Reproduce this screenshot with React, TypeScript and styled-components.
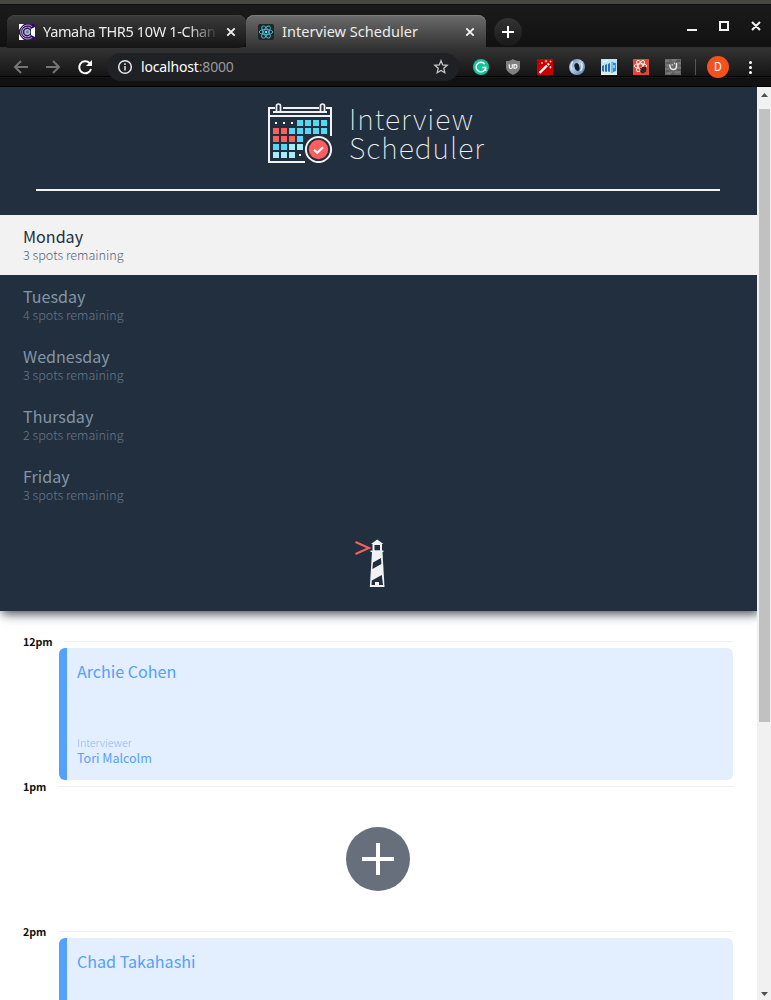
import React from "react";
import styled, { createGlobalStyle } from "styled-components";

const GlobalStyle = createGlobalStyle`
  * { box-sizing: border-box; }
  html, body { margin: 0; height: 100%; overflow: hidden; background: #fff; }
  svg { display: block; flex: none; }
`;

const sourceFont = `"Noto Sans CJK SC", "Noto Sans", sans-serif`;
const uiFont = `"Noto Sans", "Open Sans", sans-serif`;

const Window = styled.div`
  width: 771px;
  height: 1000px;
  display: flex;
  flex-direction: column;
  overflow: hidden;
`;

/* ---------- browser chrome ---------- */
const TabStrip = styled.div`
  height: 48px;
  flex: none;
  display: flex;
  align-items: flex-start;
  padding: 11px 7px 0;
  border-top: 4px solid #484842;
  background: linear-gradient(#1b1b1b, #111);
  box-shadow: inset 0 -1px #303030, inset 0 1px #101010;
`;

const Tab = styled.div<{ $active?: boolean }>`
  width: ${(p) => (p.$active ? 240 : 239)}px;
  height: 33px;
  display: flex;
  align-items: center;
  padding: 1px ${(p) => (p.$active ? 11 : 10)}px 0 12px;
  border-radius: 8px 8px ${(p) => (p.$active ? "0 0" : "8px 0")};
  background: ${(p) => (p.$active ? "linear-gradient(#6b6b6b, #333)" : "linear-gradient(#3b3b3b, #151515)")};
  box-shadow: inset 0 1px ${(p) => (p.$active ? "#7c7c7c" : "#424242")};
`;

const TabTitle = styled.div<{ $fade?: boolean; $spacing: number }>`
  width: 176px;
  margin: -2px 0 0 8px;
  overflow: hidden;
  white-space: nowrap;
  font: 14.5px/20px ${uiFont};
  letter-spacing: ${(p) => p.$spacing}px;
  color: #ececec;
  ${(p) => p.$fade && "mask-image: linear-gradient(90deg, #000 82%, transparent 100%);"}
`;

const TabClose = styled.div`
  margin-left: auto;
`;

const NewTab = styled.div`
  width: 28px;
  height: 28px;
  margin: 3px 0 0 8px;
  border-radius: 50%;
  background: linear-gradient(#333, #191919);
  display: grid;
  place-items: center;
`;

const WindowButtons = styled.div`
  margin: 5px 2px 0 auto;
`;

const Toolbar = styled.div`
  height: 39px;
  flex: none;
  display: flex;
  align-items: flex-start;
  padding: 5px 14px 0 12px;
  background: linear-gradient(#333 0, #151515 28px, #000 28px, #000 29px, #1d1d1d 29px, #111 30px, #111 38px, #000 38px);
`;

const NavIcons = styled.div`
  padding-top: 4px;
  width: 95px;
`;

const Address = styled.div`
  width: 352px;
  height: 28px;
  display: flex;
  align-items: center;
  padding: 0 10px;
  border-radius: 14px;
  background: #202124;
`;

const Url = styled.div`
  margin-left: 8px;
  font: 14px/20px ${uiFont};
  letter-spacing: -0.16px;
  color: #fff;
  span { color: #9a9a9a; }
`;

const Star = styled.div`
  margin-left: auto;
`;

const Extensions = styled.div`
  display: flex;
  gap: 16px;
  margin: 6px 0 0 14px;
`;

const Divider = styled.div`
  width: 1px;
  height: 16px;
  margin: 6px 0 0 14px;
  background: #555;
`;

const Avatar = styled.div`
  width: 22px;
  height: 22px;
  margin: 3px 0 0 11px;
  border-radius: 50%;
  background: #f4511e;
  color: #fff;
  font: 12px/22px Roboto, sans-serif;
  text-align: center;
`;

const Kebab = styled.div`
  margin: 6px 0 0 auto;
`;

/* ---------- page ---------- */
const Viewport = styled.div`
  flex: 1;
  min-height: 0;
  display: flex;
`;

const Page = styled.main`
  width: 757px;
  height: 913px;
  overflow: hidden;
  background: #fff;
  font-family: ${sourceFont};
`;

const Sidebar = styled.section`
  height: 524px;
  padding-top: 16px;
  display: flex;
  flex-direction: column;
  align-items: center;
  background: #222f3e;
  box-shadow: 2px 3px 10px rgba(34, 47, 62, 0.85);
`;

const Brand = styled.div`
  width: 221px;
  height: 60px;
  display: flex;
  gap: 16px;
`;

const Wordmark = styled.div`
  white-space: nowrap;
  font-size: 28.5px;
  font-weight: 100;
  line-height: 29px;
  letter-spacing: 1px;
  color: #f2f2f2;
`;

const WordmarkLine = styled.div`
  height: 29px;
`;

const Separator = styled.div`
  width: 684px;
  height: 2px;
  margin: 26px 1px 24px 0;
  background: #f2f2f2;
`;

const DayList = styled.nav`
  width: 100%;
`;

const Day = styled.div<{ $selected?: boolean }>`
  height: 60px;
  padding: 9px 23px 0;
  background: ${(p) => (p.$selected ? "#f2f2f2" : "transparent")};
  color: ${(p) => (p.$selected ? "#222f3e" : "#8395a7")};
`;

const DayName = styled.div`
  font-size: 16.1px;
  line-height: 24px;
`;

const Spots = styled.div<{ $selected?: boolean }>`
  font-size: 12.6px;
  font-weight: 300;
  line-height: 14px;
  color: ${(p) => (p.$selected ? "#576574" : "#66778a")};
`;

const Lighthouse = styled.div`
  margin: 23px 2px 0 0;
  width: 46px;
`;

const Schedule = styled.section`
  padding: 24px 24px 0 23px;
`;

const Slot = styled.article`
  height: 145px;
`;

const TimeRow = styled.header`
  height: 13px;
  display: flex;
  align-items: center;
  justify-content: space-between;
  font-size: 10.7px;
  letter-spacing: -0.1px;
  font-weight: 700;
  line-height: 13px;
  color: #111;
`;

const Rule = styled.div<{ $width: number }>`
  width: ${(p) => p.$width}px;
  height: 1px;
  background: #efefef;
`;

const Card = styled.div`
  height: 132px;
  margin-left: 36px;
  padding: 11px 10px 15px 10px;
  display: flex;
  flex-direction: column;
  border-left: 8px solid #54a0ff;
  border-radius: 6px;
  background: #e3effe;
  color: #54a0ff;
`;

const Student = styled.div`
  font-size: 16.1px;
  line-height: 24px;
`;

const Label = styled.div`
  margin-top: auto;
  font-size: 10.7px;
  font-weight: 300;
  line-height: 14px;
  color: #86b9fb;
`;

const Interviewer = styled.div`
  font-size: 12.5px;
  line-height: 15px;
`;

const Empty = styled.div`
  height: 132px;
  padding-top: 34px;
  display: flex;
  justify-content: center;
`;

const AddButton = styled.div`
  width: 64px;
  height: 64px;
  border-radius: 50%;
  background: #666f7b;
  display: grid;
  place-items: center;
`;

const Scrollbar = styled.div`
  width: 14px;
  background: #f1f1f1;
  display: flex;
  flex-direction: column;
  align-items: center;
`;

const Thumb = styled.div`
  width: 11px;
  height: 613px;
  margin: 6px 0 auto 1px;
  background: #c1c1c1;
`;

const Cross = () => (
  <svg width="10" height="10" viewBox="0 0 10 10" stroke="#f2f2f2" strokeWidth="1.9">
    <path d="M1.300 1.300l7.400 7.400M8.700 1.300l-7.400 7.400" />
  </svg>
);

const YamahaIcon = () => (
  <svg width="16" height="16" viewBox="0 0 16 16">
    <path fill="#fff" d="M0 0h16v16H0z" />
    <path fill="#30105e" d="M5 0h11v3l-4 2v6l4 2v3H5L2 13 0 10V6l2-3z" />
    <path d="M13 2.500A7 7 0 1 0 13 13.500" fill="none" stroke="#cfc4dc" strokeWidth=".8" />
    <path d="M11.500 4.500A4.800 4.800 0 1 0 11.500 11.500" fill="none" stroke="#b7a7ca" strokeWidth="1.100" />
    <circle cx="8.300" cy="8" r="3" fill="#a9c4cb" />
    <circle cx="8.300" cy="8" r="1.400" fill="#647b91" />
    <path d="M0 3l4-3M0 13l4 3" stroke="#fff" />
  </svg>
);

const ReactIcon = () => (
  <svg width="16" height="16" viewBox="0 0 16 16">
    <rect width="16" height="16" rx="2" fill="#222527" />
    <g fill="none" stroke="#4db9d3" strokeWidth=".9">
      <ellipse cx="8" cy="8" rx="6.8" ry="2.6" />
      <ellipse cx="8" cy="8" rx="6.8" ry="2.6" transform="rotate(60 8 8)" />
      <ellipse cx="8" cy="8" rx="6.8" ry="2.6" transform="rotate(120 8 8)" />
    </g>
    <circle cx="8" cy="8" r="1.3" fill="#61dafb" />
  </svg>
);

const extensionDrawings = [
  <>
    <circle cx="8" cy="8" r="8" fill="#15c39a" />
    <path d="M11.8 5.2A4.8 4.8 0 1 0 12.7 8.5H9.3M12.7 8.5V12" fill="none" stroke="#fff" strokeWidth="1.4" />
  </>,
  <>
    <path d="M8 0c2 1.4 4 2 7 2v6c0 4-3 6-7 8-4-2-7-4-7-8V2c3 0 5-.6 7-2z" fill="#808080" />
    <path d="M4.3 5.3v2.8q0 1.4 1.5 1.4t1.5-1.4V5.3M9 5.6h1q2 0 2 1.8t-2 1.8H9z" fill="none" stroke="#fff" strokeWidth="1.1" />
  </>,
  <>
    <path d="M0 0h16v16H0z" fill="#c90000" />
    <path d="M2.5 14L10 6.5" stroke="#fff" strokeWidth="2.4" />
    <path d="M10.7 5.8L12 4.5" stroke="#fff" strokeWidth="2.4" />
    <path d="M9 1v2.5M7.8 2.2h2.5M5 3v2M4 4h2M13.5 7v2.5M12.2 8.2h2.5M13.5 1.5v2M12.5 2.5h2" stroke="#ffd8d8" strokeWidth=".8" />
  </>,
  <>
    <defs>
      <linearGradient id="ring" x2="1" y2="1">
        <stop offset="0" stopColor="#526f91" />
        <stop offset=".45" stopColor="#b4cce8" />
        <stop offset="1" stopColor="#4a6d96" />
      </linearGradient>
    </defs>
    <circle cx="8" cy="8" r="8" fill="url(#ring)" />
    <path d="M4 2.5Q1 6 2.5 10.5M12 4q2.5 4-.5 8" stroke="#e2ecf7" strokeWidth="1.5" fill="none" />
    <ellipse cx="8" cy="8" rx="2.4" ry="4" fill="#111a29" transform="rotate(-15 8 8)" />
  </>,
  <>
    <path d="M0 0h16v16H0z" fill="#bfe4f2" />
    <path d="M0 12h16v4H0z" fill="#dcebf0" />
    <path d="M1 7l2-1v7l-2-1zM4 6l2-1v8l-2-.5zM7 5l2-1v9l-2-.5z" fill="#2a6fb8" />
    <path d="M10 3l5 1v8l-5 2z" fill="#2b8ed4" />
    <path d="M10 3l2 .5v10l-2 .5z" fill="#6fc0ee" />
    <path d="M2 3l5-1.500M13 6v3" stroke="#fff" fill="none" />
  </>,
  <>
    <path d="M0 0h16v16H0z" fill="#df4a3d" />
    <g fill="none" stroke="#fff" strokeWidth=".9">
      <ellipse cx="7.5" cy="7" rx="6.3" ry="2.3" />
      <ellipse cx="7.5" cy="7" rx="6.3" ry="2.3" transform="rotate(60 7.5 7)" />
      <ellipse cx="7.5" cy="7" rx="6.3" ry="2.3" transform="rotate(120 7.5 7)" />
    </g>
    <ellipse cx="10.3" cy="11" rx="2.7" ry="3.5" fill="#38211f" transform="rotate(35 10.3 11)" />
    <path d="M6.5 9l7 4M8 13l5-5M10 8v6" stroke="#38211f" />
  </>,
  <>
    <path d="M0 0h16v16H0z" fill="#676767" />
    <path d="M0 2h4M7 1h5M13 4h3M1 6h3M0 10h4M12 9h4M2 14h5M10 13h5" stroke="#8b8b8b" />
    <path d="M2 4h3M11 2h4M1 12h3M12 11h4M6 15h3" stroke="#4b4b4b" />
    <path d="M4.700 5.500q.2 5 3.500 5t3.300-3.500V4" fill="none" stroke="#e8e8e8" strokeWidth="1.500" />
    <path d="M7.300 5v1.800M9.500 3.500v1.800" stroke="#ccc" strokeWidth="1.200" />
  </>,
];

const CYAN = "#55d8f0";
const RED = "#ff5e5e";
const PALE = "#a6edfa";
const calendarRows: (string | null)[][] = [
  [null, null, null, CYAN, CYAN, CYAN, CYAN],
  [RED, RED, CYAN, CYAN, CYAN, CYAN, CYAN],
  [RED, RED, RED, CYAN],
  [CYAN, CYAN, PALE, PALE],
  [PALE, PALE, PALE, null],
];

const CalendarLogo = () => (
  <svg width="65" height="60" viewBox="0 0 65 60">
    <g fill="none" stroke="#f2f2f2" strokeWidth="2">
      <path d="M7 5H1v54h36M15 5h36M58 5h5v28M1 13h62M5 9h54" />
      <path d="M8.500 9V3a2 2 0 0 1 4 0v6M52.500 9V3a2 2 0 0 1 4 0v6" strokeWidth="1.700" />
    </g>
    {calendarRows.map((row, y) =>
      row.map((fill, x) =>
        fill ? (
          <rect key={`${x}-${y}`} x={5 + x * 8} y={17 + y * 8} width="6" height="6" fill={fill} />
        ) : (
          <rect key={`${x}-${y}`} x={7 + x * 8} y={19 + y * 8} width="2" height="2" fill="#fff" />
        )
      )
    )}
    <circle cx="50.500" cy="46.500" r="14.500" fill="#222f3e" />
    <circle cx="50.500" cy="46.500" r="12.600" fill="#222f3e" stroke="#f2f2f2" strokeWidth="2" />
    <circle cx="50.500" cy="46.500" r="9.700" fill={RED} />
    <path d="M46 46.800l3.200 3 5.800-5.600" fill="none" stroke="#fff" strokeWidth="2" />
  </svg>
);

const LighthouseLogo = () => (
  <svg width="46" height="50" viewBox="0 0 46 50">
    <path d="M.5 4L14 10 .500 16" fill="none" stroke="#ff5e5e" strokeWidth="2" />
    <path d="M16 6l6.200-4.500L28.400 6zM17.500 5h9.500v9h-9.500z" fill="#f2f2f2" />
    <path d="M19.500 7h5.500v5.500h-5.500z" fill="#222f3e" />
    <path d="M15.500 13.300h13" stroke="#f2f2f2" strokeWidth="1.500" />
    <path d="M17 14h10.500L29.500 49H14.800z" fill="#f2f2f2" />
    <path d="M18 24.500l8-4.500.4 6-9 5zM16.800 42.500l10-5.500 1.200 10H16.500z" fill="#222f3e" />
    <path d="M20 48v-4h4v4z" fill="#f2f2f2" />
  </svg>
);

const days = [
  ["Monday", 3],
  ["Tuesday", 4],
  ["Wednesday", 3],
  ["Thursday", 2],
  ["Friday", 3],
] as const;

const appointments = [
  { time: "12pm", student: "Archie Cohen", interviewer: "Tori Malcolm", rule: 669 },
  { time: "1pm", rule: 675 },
  { time: "2pm", student: "Chad Takahashi", rule: 675 },
];

export default function App() {
  return (
    <Window>
      <GlobalStyle />
      <TabStrip>
        <Tab>
          <YamahaIcon />
          <TabTitle $fade $spacing={-0.35}>Yamaha THR5 10W 1-Chan</TabTitle>
          <TabClose><Cross /></TabClose>
        </Tab>
        <Tab $active>
          <ReactIcon />
          <TabTitle $spacing={0.04}>Interview Scheduler</TabTitle>
          <TabClose><Cross /></TabClose>
        </Tab>
        <NewTab>
          <svg width="12" height="12" viewBox="0 0 12 12" stroke="#fff" strokeWidth="2"><path d="M6 0v12M0 6h12" /></svg>
        </NewTab>
        <WindowButtons>
          <svg width="76" height="12" viewBox="0 0 76 12" fill="none" stroke="#f2f2f2" strokeWidth="2">
            <path d="M1 10h10M34 2h8v8h-8zM66 2l8 8M74 2l-8 8" />
          </svg>
        </WindowButtons>
      </TabStrip>
      <Toolbar>
        <NavIcons>
          <svg width="84" height="20" viewBox="0 0 84 20" fill="none" strokeWidth="2">
            <path d="M16 10H3M9 4l-6 6 6 6M34 10h13M41 4l6 6-6 6" stroke="#747474" />
            <path d="M77.500 6A6 6 0 1 0 79 12" stroke="#fff" />
            <path d="M80 3v6h-6z" fill="#fff" />
          </svg>
        </NavIcons>
        <Address>
          <svg width="16" height="16" viewBox="0 0 16 16" fill="none" stroke="#e8e8e8" strokeWidth="1.500">
            <circle cx="8" cy="8" r="6.300" /><path d="M8 7v4.500M8 4.200v1.700" />
          </svg>
          <Url>localhost<span>:8000</span></Url>
          <Star>
            <svg width="16" height="16" viewBox="0 0 16 16" fill="none" stroke="#c8c8c8" strokeWidth="1.300">
              <path d="M8 1.800l1.700 4.100 4.500.4-3.400 3 1 4.400L8 11.400l-3.800 2.300 1-4.400-3.400-3 4.500-.4z" />
            </svg>
          </Star>
        </Address>
        <Extensions>
          {extensionDrawings.map((drawing, i) => (
            <svg key={i} width="16" height="16" viewBox="0 0 16 16">{drawing}</svg>
          ))}
        </Extensions>
        <Divider />
        <Avatar>D</Avatar>
        <Kebab>
          <svg width="13" height="16" viewBox="0 0 13 16" fill="#fff">
            <circle cx="6.500" cy="3.500" r="1.500" /><circle cx="6.500" cy="8.500" r="1.500" /><circle cx="6.500" cy="13.500" r="1.500" />
          </svg>
        </Kebab>
      </Toolbar>
      <Viewport>
        <Page>
          <Sidebar>
            <Brand>
              <CalendarLogo />
              <Wordmark>
                <WordmarkLine>Interview</WordmarkLine>
                <WordmarkLine>Scheduler</WordmarkLine>
              </Wordmark>
            </Brand>
            <Separator />
            <DayList>
              {days.map(([name, spots], i) => (
                <Day key={name} $selected={i === 0}>
                  <DayName>{name}</DayName>
                  <Spots $selected={i === 0}>{spots} spots remaining</Spots>
                </Day>
              ))}
            </DayList>
            <Lighthouse><LighthouseLogo /></Lighthouse>
          </Sidebar>
          <Schedule>
            {appointments.map((a) => (
              <Slot key={a.time}>
                <TimeRow>{a.time}<Rule $width={a.rule} /></TimeRow>
                {a.student ? (
                  <Card>
                    <Student>{a.student}</Student>
                    {a.interviewer && (
                      <>
                        <Label>Interviewer</Label>
                        <Interviewer>{a.interviewer}</Interviewer>
                      </>
                    )}
                  </Card>
                ) : (
                  <Empty>
                    <AddButton>
                      <svg width="32" height="32" viewBox="0 0 32 32" stroke="#fff" strokeWidth="4"><path d="M16 0v32M0 16h32" /></svg>
                    </AddButton>
                  </Empty>
                )}
              </Slot>
            ))}
          </Schedule>
        </Page>
        <Scrollbar>
          <svg width="14" height="16" viewBox="0 0 14 16" fill="#505050"><path d="M4 10h7L7.500 6z" /></svg>
          <Thumb />
          <svg width="14" height="12" viewBox="0 0 14 12" fill="#505050"><path d="M4 4h7L7.500 8z" /></svg>
        </Scrollbar>
      </Viewport>
    </Window>
  );
}
